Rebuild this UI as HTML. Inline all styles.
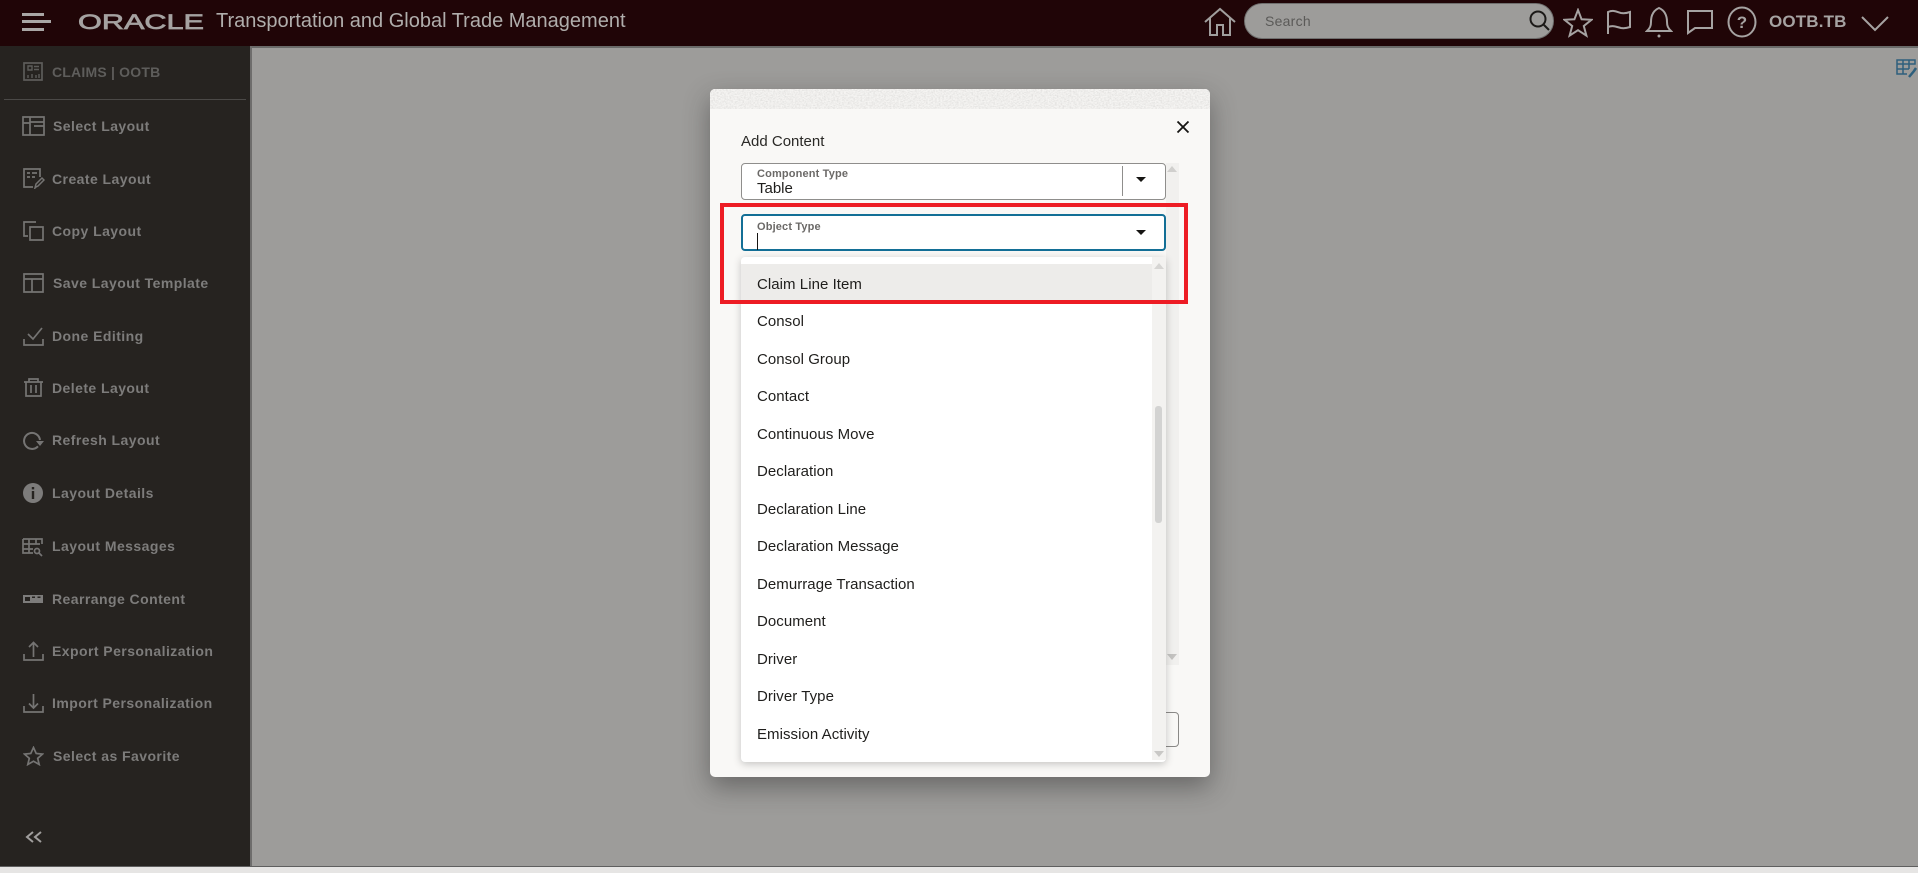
<!DOCTYPE html>
<html lang="en">
<head>
<meta charset="utf-8">
<title>Oracle Transportation and Global Trade Management</title>
<style>
html,body{margin:0;padding:0;width:1918px;height:873px;overflow:hidden;background:#9d9c9a;font-family:"Liberation Sans",Arial,sans-serif}
.a{position:absolute}
#hdr{left:0;top:0;width:1918px;height:46px;background:#200507}
#hline{left:252px;top:46px;width:1666px;height:2px;background:#6a6a69}
#side{left:0;top:46px;width:250px;height:821px;background:#262320}
#sideb{left:250px;top:46px;width:2px;height:821px;background:#6e6d6c}
#bot{left:0;top:866px;width:1918px;height:1px;background:#5f5f5f}
#bot2{left:0;top:867px;width:1918px;height:6px;background:#e6e5e4}
.it{position:absolute;left:52px;font-size:14px;font-weight:bold;color:#7d7c7b;line-height:20px;white-space:nowrap;letter-spacing:.44px}
.ic{position:absolute;left:21px;width:24px;height:24px;fill:none;stroke:#757473;stroke-width:1.700}
.h{position:absolute;fill:none;stroke:#a6a3a2;stroke-width:2}
#modal{left:710px;top:89px;width:500px;height:688px;background:#f9f8f6;border-radius:5px;box-shadow:0 10px 26px rgba(30,30,30,.42);overflow:hidden}
.fld{position:absolute;box-sizing:border-box;left:741px;width:425px;background:#fff;border-radius:4px}
.lab{position:absolute;left:757px;font-size:11px;font-weight:bold;color:#6b6967;line-height:13px;letter-spacing:.15px;white-space:nowrap}
.arr{position:absolute;left:1135px;width:0;height:0;border-left:5px solid transparent;border-right:5px solid transparent;border-top:5px solid #161513}
.opt{position:absolute;left:757px;font-size:15px;color:#1f1e1c;line-height:20px;white-space:nowrap;letter-spacing:.05px}
.tri{position:absolute;width:0;height:0;border-left:5px solid transparent;border-right:5px solid transparent}
</style>
</head>
<body>
<div class="a" id="hdr"></div>
<div class="a" id="side"></div>
<div class="a" id="sideb"></div>
<div class="a" id="hline"></div>
<div class="a" id="bot"></div>
<div class="a" id="bot2"></div>

<!-- header left -->
<div class="a" style="left:22px;top:13px;width:22px;height:3px;background:#a9a6a5"></div>
<div class="a" style="left:22px;top:20px;width:29px;height:3px;background:#a9a6a5"></div>
<div class="a" style="left:22px;top:28px;width:22px;height:3px;background:#a9a6a5"></div>
<svg class="a" style="left:76px;top:8px" width="132" height="28"><text x="2" y="21" font-family="Liberation Sans" font-size="21" textLength="126" lengthAdjust="spacingAndGlyphs" fill="#a5a2a1" stroke="#a5a2a1" stroke-width=".7">ORACLE</text></svg>
<div class="a" style="left:216px;top:8px;font-size:20px;line-height:26px;color:#b0aeac;white-space:nowrap">Transportation and Global Trade Management</div>

<!-- header right -->
<svg class="h" style="left:1203px;top:7px" width="34" height="30" viewBox="0 0 34 30"><path d="M2 15 17 2l15 13M7 11v17h7V18h6v10h7V11" stroke="#a09e9d"/></svg>
<div class="a" style="left:1244px;top:3px;width:310px;height:36px;box-sizing:border-box;background:#9d9c9a;border:1px solid #6f6f6e;border-radius:18px"></div>
<div class="a" style="left:1265px;top:11px;font-size:14px;line-height:20px;color:#5b5a58;letter-spacing:.25px">Search</div>
<svg class="h" style="left:1527px;top:8px;stroke:#1c1a18" width="26" height="26"><circle cx="11" cy="11" r="7.500"/><path d="M16 16l6 6"/></svg>
<svg class="h" style="left:1563px;top:8px" width="30" height="30" viewBox="0 0 30 30"><path d="M15 2l3.600 9.300 9.900.5-7.700 6.200 2.600 9.600L15 22.200l-8.400 5.400 2.600-9.600L1.500 11.800l9.900-.5z"/></svg>
<svg class="h" style="left:1605px;top:8px" width="28" height="28" viewBox="0 0 28 28"><path d="M3 26V4c6-2.500 9 0 13 1 3 .6 6 0 9-1v15c-3 1-6 1.500-9 1-4-1-8-3-13-1"/></svg>
<svg class="h" style="left:1645px;top:5px" width="28" height="34" viewBox="0 0 28 34"><path d="M2 26c3-3 4-5 4-9s1-11 8-14c7 3 8 10 8 14s1 6 4 9z"/><circle cx="14" cy="31" r="1.500" fill="#a6a3a2" stroke="none"/></svg>
<svg class="h" style="left:1686px;top:9px" width="28" height="26" viewBox="0 0 28 26"><path d="M2 2h24v17H9l-7 5z"/></svg>
<svg class="h" style="left:1727px;top:6px" width="30" height="32" viewBox="0 0 30 32"><ellipse cx="15" cy="16" rx="13.500" ry="14.500"/><text x="15" y="22" text-anchor="middle" font-family="Liberation Sans" font-weight="bold" font-size="17" fill="#a6a3a2" stroke="none">?</text></svg>
<div class="a" style="left:1769px;top:11px;font-size:17px;font-weight:bold;line-height:22px;color:#a6a3a2;white-space:nowrap;letter-spacing:.15px">OOTB.TB</div>
<svg class="h" style="left:1861px;top:14px" width="28" height="18"><path d="M1 3l13 13L27 3"/></svg>

<!-- top-right table icon -->
<svg class="a" style="left:1896px;top:59px" width="22" height="20" viewBox="0 0 22 20" fill="none" stroke="#2e5f7c" stroke-width="1.500"><path d="M1 1h18v4H1zM1 5v10h10M1 10h12M7 1v14M13 1v9"/><path d="M20 9l-2 3-5 6" stroke-width="2.500"/></svg>

<!-- sidebar -->
<svg class="ic" style="left:22px;top:61px;width:22px;height:21px;stroke:#5d5c5a" viewBox="0 0 22 21"><path d="M2 2h18v17H2z"/><path d="M6 5h4v4H6zM12 5.500h5M12 8.500h5M6 14v3M10 13v4M14 14v3M17 13v4" stroke-width="1.400"/></svg>
<div class="it" style="top:62px;color:#5e5d5b;letter-spacing:.2px">CLAIMS | OOTB</div>
<div class="a" style="left:4px;top:99px;width:242px;height:1px;background:#4b4947"></div>

<svg class="ic" style="left:22px;top:115px;width:23px;height:21px" viewBox="0 0 23 21"><path d="M1 2h21v18H1zM8 2v18M1 8h7M8 7h14M12 11h10"/></svg>
<div class="it" style="top:116px;left:53px">Select Layout</div>
<svg class="ic" style="left:22px;top:167px;width:23px;height:22px" viewBox="0 0 23 22"><path d="M18 10V2H2v18h9M5 6h3M10 6h5M5 10h3M10 10h3"/><path d="M14 20l-1 1 1-4 6-6 2 2-6 6z" stroke-width="1.500"/></svg>
<div class="it" style="top:169px">Create Layout</div>
<svg class="ic" style="left:22px;top:220px;width:23px;height:21px" viewBox="0 0 23 21"><path d="M14 2H2v14h4M8 7h13v13H8z"/></svg>
<div class="it" style="top:221px">Copy Layout</div>
<svg class="ic" style="left:22px;top:272px;width:23px;height:21px" viewBox="0 0 23 21"><path d="M2 2h19v18H2zM2 7h19M10 7v13"/></svg>
<div class="it" style="top:273px;left:53px">Save Layout Template</div>
<svg class="ic" style="left:22px;top:326px;width:23px;height:21px" viewBox="0 0 23 21"><path d="M2 13v6h19v-6M6 8l5 5 9-11"/></svg>
<div class="it" style="top:326px">Done Editing</div>
<svg class="ic" style="left:23px;top:377px;width:21px;height:21px" viewBox="0 0 21 21"><path d="M1 5h19M6 5V2h9v3M3 5v14h15V5M8 8v8M13 8v8"/></svg>
<div class="it" style="top:378px">Delete Layout</div>
<svg class="ic" style="left:22px;top:431px;width:23px;height:21px" viewBox="0 0 23 21"><path d="M18 9A8 8 0 1 0 16 15.300" stroke-width="2"/><path d="M14 10h8l-4 5z" fill="#757473" stroke="none"/></svg>
<div class="it" style="top:430px">Refresh Layout</div>
<svg class="ic" style="left:22px;top:482px;width:22px;height:22px;stroke:none" viewBox="0 0 22 22"><circle cx="11" cy="11" r="10" fill="#7d7c7b"/><path d="M9.800 5h2.400v2.400H9.800zM9.800 9h2.400v8H9.800z" fill="#262320"/></svg>
<div class="it" style="top:483px">Layout Details</div>
<svg class="ic" style="left:22px;top:537px;width:22px;height:20px" viewBox="0 0 22 20" stroke-width="1.300"><path d="M1 2h19v5M1 2v14h10M1 7h17M1 12h10M7 2v14M14 2v5"/><circle cx="15" cy="14" r="2.500"/><path d="M17 16l3 3"/></svg>
<div class="it" style="top:536px">Layout Messages</div>
<svg class="ic" style="left:23px;top:590px;width:21px;height:18px;stroke:none" viewBox="0 0 21 18"><path d="M0 5h20v8H0z" fill="#7d7c7b"/><path d="M2 7h5v4H2zM9 6.500h3V8H9zM14.500 6.500h3V8h-3z" fill="#262320"/></svg>
<div class="it" style="top:589px">Rearrange Content</div>
<svg class="ic" style="left:23px;top:641px;width:21px;height:20px" viewBox="0 0 21 20"><path d="M1 13v6h19v-6M10.500 16V2M6 6l4.500-4.500L15 6"/></svg>
<div class="it" style="top:641px">Export Personalization</div>
<svg class="ic" style="left:23px;top:693px;width:21px;height:20px" viewBox="0 0 21 20"><path d="M1 13v6h19v-6M10.500 1v14M6 10.500l4.500 4.500 4.500-4.500"/></svg>
<div class="it" style="top:693px">Import Personalization</div>
<svg class="ic" style="left:23px;top:746px;width:21px;height:20px" viewBox="0 0 21 20"><path d="M10.500 1.500l2.700 6 6.300.6-4.800 4.200 1.500 6.200-5.700-3.300-5.700 3.300 1.500-6.200L1.500 8.100l6.300-.6z"/></svg>
<div class="it" style="top:746px;left:53px">Select as Favorite</div>
<svg class="a" style="left:25px;top:830px" width="18" height="14" fill="none" stroke="#a09e9d" stroke-width="2"><path d="M8 2L2 7l6 5M16 2l-6 5 6 5"/></svg>

<!-- modal -->
<div class="a" id="modal">
<svg class="a" style="left:0;top:0" width="500" height="20"><filter id="n" x="0" y="0" width="100%" height="100%"><feTurbulence type="fractalNoise" baseFrequency=".55 .8" numOctaves="2" seed="4"/><feColorMatrix values="0 0 0 0 0 0 0 0 0 0 0 0 0 0 0 1.600 0 0 0 -.55"/></filter><rect width="500" height="20" fill="#f5f4f2"/><rect width="500" height="20" filter="url(#n)" opacity=".1"/></svg>
</div>
<div class="a" style="left:741px;top:132px;font-size:15px;line-height:20px;color:#2a2926;white-space:nowrap">Add Content</div>
<svg class="a" style="left:1176px;top:120px" width="14" height="14" fill="none" stroke="#161513" stroke-width="1.800"><path d="M1.500 1.500l11 11M12.500 1.500l-11 11"/></svg>

<!-- background scroll track -->
<div class="a" style="left:1166px;top:163px;width:13px;height:502px;background:#f1f0ee"></div>
<div class="tri" style="left:1167px;top:166px;border-bottom:6px solid #d0cfcd"></div>
<div class="tri" style="left:1167px;top:654px;border-top:6px solid #c4c3c1"></div>
<div class="a" style="left:1150px;top:712px;width:29px;height:35px;box-sizing:border-box;border:1px solid #8a8987;border-radius:4px"></div>

<!-- component type -->
<div class="fld" style="top:163px;height:37px;border:1px solid #8f8e8c"></div>
<div class="lab" style="top:168px">Component Type</div>
<div class="a" style="left:757px;top:179px;font-size:15px;line-height:19px;color:#1f1e1c">Table</div>
<div class="a" style="left:1122px;top:166px;width:1px;height:30px;background:#8f8e8c"></div>
<div class="arr" style="top:177px;left:1136px"></div>

<!-- object type -->
<div class="fld" style="top:214px;height:37px;border:2px solid #136f96"></div>
<div class="lab" style="top:221px">Object Type</div>
<div class="a" style="left:757px;top:233px;width:1px;height:17px;background:#161513"></div>
<div class="arr" style="top:230px;left:1136px"></div>

<!-- dropdown -->
<div class="a" style="left:741px;top:257px;width:425px;height:505px;background:#fff;border-radius:4px;box-shadow:0 2px 8px rgba(60,60,60,.28)"></div>
<div class="a" style="left:1152px;top:257px;width:14px;height:503px;background:#f3f2f0"></div>
<div class="tri" style="left:1154px;top:263px;border-bottom:6px solid #d6d5d3"></div>
<div class="tri" style="left:1154px;top:751px;border-top:6px solid #c9c8c6"></div>
<div class="a" style="left:1155px;top:406px;width:7px;height:117px;background:#d3d3d2;border-radius:3px"></div>
<div class="a" style="left:741px;top:264px;width:411px;height:36px;background:#edecea"></div>

<div class="opt" style="top:275px">Claim Line Item</div>
<div class="opt" style="top:312px">Consol</div>
<div class="opt" style="top:350px">Consol Group</div>
<div class="opt" style="top:387px">Contact</div>
<div class="opt" style="top:425px">Continuous Move</div>
<div class="opt" style="top:462px">Declaration</div>
<div class="opt" style="top:500px">Declaration Line</div>
<div class="opt" style="top:537px">Declaration Message</div>
<div class="opt" style="top:575px">Demurrage Transaction</div>
<div class="opt" style="top:612px">Document</div>
<div class="opt" style="top:650px">Driver</div>
<div class="opt" style="top:687px">Driver Type</div>
<div class="opt" style="top:725px">Emission Activity</div>

<!-- red highlight -->
<div class="a" style="left:720px;top:203px;width:468px;height:101px;box-sizing:border-box;border:4px solid #ed1c24"></div>
</body>
</html>
